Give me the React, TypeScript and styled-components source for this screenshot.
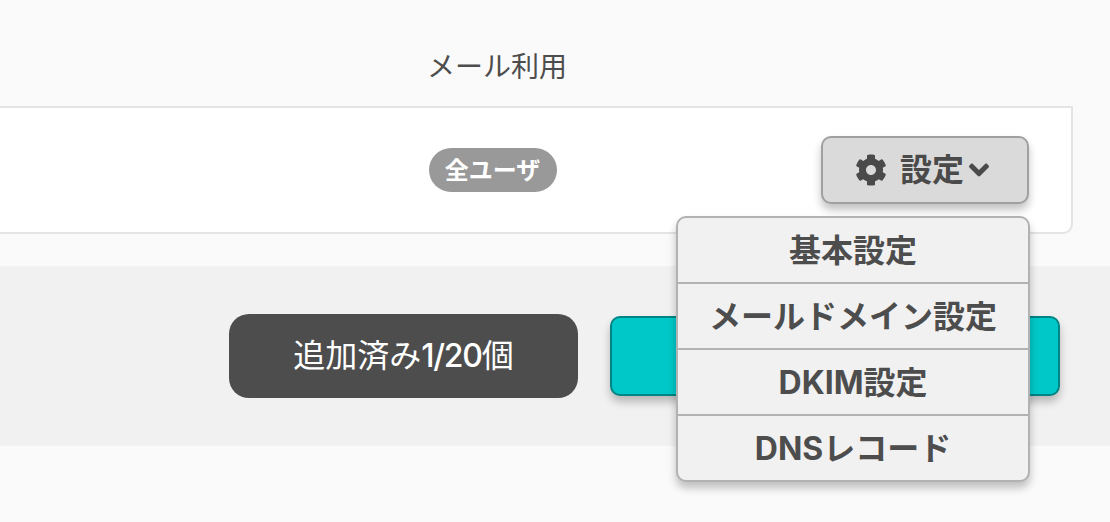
import { FaAngleDown, FaCog } from "react-icons/fa"
import styled, { createGlobalStyle, css } from "styled-components"

const menuItems = ["基本設定", "メールドメイン設定", "DKIM設定", "DNSレコード"]

export default function App() {
  return (
    <>
      <GlobalStyle />
      <Page>
        <TableHeader>
          <HeaderLabel>メール利用</HeaderLabel>
        </TableHeader>

        <TableRow>
          <Badge>全ユーザ</Badge>

          <DropdownWrapper>
            <SettingButton type="button">
              <FaCog size={32} />
              <SettingLabel>設定</SettingLabel>
              <FaAngleDown size={32} />
            </SettingButton>

            <Menu>
              {menuItems.map((item) => (
                <MenuItem key={item}>
                  <MenuText>{item}</MenuText>
                </MenuItem>
              ))}
            </Menu>
          </DropdownWrapper>
        </TableRow>

        <ActionBar>
          <Counter>
            <CounterText>
              追加済み<CounterValue>1/20</CounterValue>個
            </CounterText>
          </Counter>
          <AddButton type="button" />
        </ActionBar>
      </Page>
    </>
  )
}

const GlobalStyle = createGlobalStyle`
  *,
  *::before,
  *::after {
    box-sizing: border-box;
  }

  body {
    margin: 0;
    overflow: hidden;
    background: #fafafa;
    color: #4d4d4d;
    font-family: Inter, "Noto Sans CJK JP", sans-serif;
  }
`

const raised = css`
  box-shadow: 0 6px 8px rgba(0, 0, 0, 0.24);
`

const Page = styled.main`
  height: 522px;
`

const TableHeader = styled.header`
  display: flex;
  align-items: center;

  height: 106px;
  padding: 28px 0 0 427px;
`

const HeaderLabel = styled.span`
  font-size: 28px;
  line-height: 40px;
`

const TableRow = styled.section`
  display: flex;
  justify-content: space-between;
  align-items: center;

  width: 1073px;
  height: 128px;
  padding: 0 42px 0 429px;

  border: 2px solid #e4e4e4;
  border-left: 0;
  border-radius: 0 0 10px 0;
  background: #fff;
`

const Badge = styled.span`
  display: flex;
  justify-content: center;
  align-items: center;

  width: 128px;
  height: 44px;
  padding: 2px 1px 0 0;

  border-radius: 22px;
  background: #999;
  color: #fff;

  font-size: 24px;
  font-weight: 700;
  line-height: 42px;
`

const DropdownWrapper = styled.div`
  position: relative;
`

const SettingButton = styled.button`
  ${raised}

  display: flex;
  justify-content: center;
  align-items: center;

  width: 208px;
  height: 68px;
  padding: 0;

  border: 2px solid #a0a0a0;
  border-radius: 10px;
  background: #dadada;
  color: #4a4a4a;

  font-family: inherit;
  font-size: 32px;
  font-weight: 700;
`

const SettingLabel = styled.span`
  margin: 0 -1px 0 13px;

  line-height: 64px;
`

const Menu = styled.ul`
  ${raised}

  position: absolute;
  top: 80px;
  right: -1px;
  z-index: 1;

  width: 354px;
  margin: 0;
  padding: 0;

  border: 2px solid #b2b2b2;
  border-radius: 10px;
  background: #f1f1f1;

  list-style: none;
`

const MenuItem = styled.li`
  display: flex;
  justify-content: center;

  height: 66px;

  font-size: 32px;
  font-weight: 700;
  line-height: 66px;

  & + & {
    border-top: 2px solid #b2b2b2;
  }

  &:first-child {
    height: 64px;
  }
`

const MenuText = styled.span`
  white-space: nowrap;
`

const ActionBar = styled.footer`
  display: flex;
  align-items: center;
  gap: 32px;

  height: 180px;
  margin-top: 32px;
  padding-left: 229px;

  background: #f1f1f1;
`

const Counter = styled.div`
  display: flex;
  justify-content: center;
  align-items: center;

  width: 349px;
  height: 84px;

  border-radius: 20px;
  background: #4d4d4d;
  color: #fff;
`

const CounterText = styled.span`
  font-size: 32px;
  line-height: 84px;
`

const CounterValue = styled.span`
  font-weight: 500;
  letter-spacing: -1.3px;
`

const AddButton = styled.button`
  ${raised}

  width: 450px;
  height: 80px;

  border: 2px solid #008484;
  border-radius: 10px;
  background: #00c8c8;
`
